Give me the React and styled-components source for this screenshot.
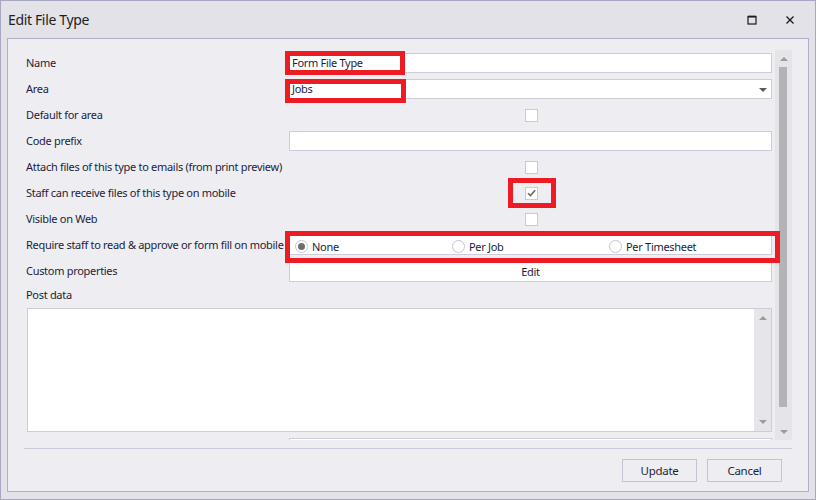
import React from "react";
import styled, { createGlobalStyle } from "styled-components";

const Global = createGlobalStyle`
  html, body { margin: 0; padding: 0; background: #e3e2e8; }
  * { box-sizing: border-box; }
  body { font-family: "Noto Sans", "Open Sans", sans-serif; font-size: 11px; letter-spacing: -0.3px; color: #1d1d38; }
`;

const Window = styled.div`
  position: relative;
  width: 816px;
  height: 500px;
  border: 1px solid #a7a6c3;
  background: #e3e2e8;
  display: flex;
  flex-direction: column;
`;

const TitleBar = styled.div`
  height: 37px;
  display: flex;
  align-items: center;
  padding: 0 6px 0 7px;
  font-size: 14px;
  letter-spacing: -0.35px;
  color: #1e1e1e;
`;

const Title = styled.div`
  flex: 1;
  padding-bottom: 1px;
`;

const WinButton = styled.div`
  width: 38px;
  height: 37px;
  display: flex;
  align-items: center;
  justify-content: center;
`;

const Panel = styled.div`
  flex: 1;
  margin: 0 6px 7px 6px;
  border: 1px solid #b1b0c9;
  background: #eeedf2;
  padding: 11px 16px 0 16px;
  display: flex;
  flex-direction: column;
`;

const Scroller = styled.div`
  height: 390px;
  display: flex;
  gap: 3px;
  overflow: hidden;
`;

const Form = styled.div`
  flex: 1;
  padding: 3px 0 0 2px;
  display: grid;
  grid-template-columns: 263px 1fr;
  grid-auto-rows: min-content;
  row-gap: 6px;
  align-content: start;
`;

const Label = styled.div`
  height: ${(p) => p.$h || 20}px;
  display: flex;
  align-items: center;
  white-space: nowrap;
  padding-bottom: 1px;
  grid-column: ${(p) => (p.$full ? "1 / -1" : "auto")};
`;

const Field = styled.div`
  height: 20px;
  background: #ffffff;
  border: 1px solid #cdccda;
  display: flex;
  align-items: center;
  padding-left: 2px;
  padding-bottom: 1px;
  position: relative;
  grid-column: ${(p) => (p.$col2 ? "2" : "auto")};
`;

const DropArrow = styled.div`
  position: absolute;
  right: 4px;
  top: 8px;
  width: 0;
  height: 0;
  border-left: 4px solid transparent;
  border-right: 4px solid transparent;
  border-top: 4px solid #5a5a5a;
`;

const CheckCell = styled.div`
  height: 20px;
  display: flex;
  align-items: center;
  justify-content: center;
`;

const CheckBox = styled.div`
  width: 13px;
  height: 13px;
  background: #ffffff;
  border: 1px solid #c9c8d6;
  display: flex;
  align-items: center;
  justify-content: center;
  margin-left: 1px;
`;

const RadioGroup = styled.div`
  height: 20px;
  background: #ffffff;
  border: 1px solid #cdccda;
  display: grid;
  grid-template-columns: repeat(3, 157px);
`;

const RadioItem = styled.div`
  display: flex;
  align-items: center;
  gap: 4px;
  padding: 2px 0 0 5px;
`;

const RadioCircle = styled.div`
  width: 13px;
  height: 13px;
  border-radius: 50%;
  border: 1px solid #c6c5d3;
  background: #ffffff;
  display: flex;
  align-items: center;
  justify-content: center;
  &::after {
    content: "";
    display: ${(p) => (p.$on ? "block" : "none")};
    width: 7px;
    height: 7px;
    border-radius: 50%;
    background: #6e6e6e;
  }
`;

const EditButton = styled.div`
  height: 20px;
  background: #ffffff;
  border: 1px solid #cdccda;
  display: flex;
  align-items: center;
  justify-content: center;
  padding-bottom: 1px;
  margin-top: 1px;
`;

const TextArea = styled.div`
  grid-column: 1 / -1;
  margin-left: 1px;
  height: 124px;
  background: #ffffff;
  border: 1px solid #cdccda;
  display: flex;
  justify-content: flex-end;
`;

const VBar = styled.div`
  width: 17px;
  flex: none;
  background: ${(p) => p.$bg || "#e4e4e9"};
  display: flex;
  flex-direction: column;
`;

const ArrowBox = styled.div`
  height: ${(p) => p.$h || 17}px;
  flex: none;
  display: flex;
  align-items: center;
  justify-content: center;
`;

const Tri = styled.div`
  width: 0;
  height: 0;
  border-left: 4px solid transparent;
  border-right: 4px solid transparent;
  ${(p) =>
    p.$up
      ? "border-bottom: 4px solid #9c9c9f;"
      : "border-top: 4px solid #9c9c9f;"}
`;

const Track = styled.div`
  flex: 1;
  display: flex;
  flex-direction: column;
  align-items: flex-start;
  padding-left: 4px;
`;

const Thumb = styled.div`
  width: 8px;
  height: ${(p) => p.$h}px;
  background: #b3b3b5;
`;

const Separator = styled.div`
  height: 1px;
  background: #cbcad8;
  margin-top: 8px;
`;

const Footer = styled.div`
  display: flex;
  justify-content: flex-end;
  gap: 10px;
  padding: 10px 10px 0 0;
`;

const Button = styled.div`
  width: 75px;
  height: 23px;
  border: 1px solid #c4c3d2;
  background: #eeedf2;
  display: flex;
  align-items: center;
  justify-content: center;
  font-size: 11.5px;
  padding-bottom: 1px;
`;

const Highlight = styled.div`
  position: absolute;
  left: ${(p) => p.$x}px;
  top: ${(p) => p.$y}px;
  width: ${(p) => p.$w}px;
  height: ${(p) => p.$h}px;
  border: 5px solid #ed1c24;
  pointer-events: none;
`;

const Check = () => (
  <svg width="9" height="8" viewBox="0 0 9 8">
    <path d="M1 4.2 L3.4 6.6 L8.2 1.2" fill="none" stroke="#6a6a6a" strokeWidth="1.6" />
  </svg>
);

const Row = ({ label, children }) => (
  <>
    <Label>{label}</Label>
    {children}
  </>
);

export default function App() {
  return (
    <>
      <Global />
      <Window>
        <TitleBar>
          <Title>Edit File Type</Title>
          <WinButton>
            <svg width="10" height="10" viewBox="0 0 10 10">
              <rect x="1" y="1.5" width="8" height="7.5" fill="none" stroke="#1a1a1a" strokeWidth="1.2" />
              <line x1="1" y1="1.6" x2="9" y2="1.6" stroke="#1a1a1a" strokeWidth="1.8" />
            </svg>
          </WinButton>
          <WinButton>
            <svg width="10" height="10" viewBox="0 0 10 10">
              <path d="M1.5 1.5 L8.5 8.5 M8.5 1.5 L1.5 8.5" stroke="#1a1a1a" strokeWidth="1.3" />
            </svg>
          </WinButton>
        </TitleBar>
        <Panel>
          <Scroller>
            <Form>
              <Row label="Name">
                <Field>Form File Type</Field>
              </Row>
              <Row label="Area">
                <Field>
                  Jobs
                  <DropArrow />
                </Field>
              </Row>
              <Row label="Default for area">
                <CheckCell>
                  <CheckBox />
                </CheckCell>
              </Row>
              <Row label="Code prefix">
                <Field />
              </Row>
              <Row label="Attach files of this type to emails (from print preview)">
                <CheckCell>
                  <CheckBox />
                </CheckCell>
              </Row>
              <Row label="Staff can receive files of this type on mobile">
                <CheckCell>
                  <CheckBox>
                    <Check />
                  </CheckBox>
                </CheckCell>
              </Row>
              <Row label="Visible on Web">
                <CheckCell>
                  <CheckBox />
                </CheckCell>
              </Row>
              <Row label="Require staff to read & approve or form fill on mobile">
                <RadioGroup>
                  <RadioItem>
                    <RadioCircle $on />
                    None
                  </RadioItem>
                  <RadioItem>
                    <RadioCircle />
                    Per Job
                  </RadioItem>
                  <RadioItem>
                    <RadioCircle />
                    Per Timesheet
                  </RadioItem>
                </RadioGroup>
              </Row>
              <Row label="Custom properties">
                <EditButton>Edit</EditButton>
              </Row>
              <Label $full $h={14}>
                Post data
              </Label>
              <TextArea>
                <VBar $bg="#e6e6ea">
                  <ArrowBox $h={18}>
                    <Tri $up />
                  </ArrowBox>
                  <Track />
                  <ArrowBox $h={18}>
                    <Tri />
                  </ArrowBox>
                </VBar>
              </TextArea>
              <Field $col2 />
            </Form>
            <VBar $bg="#e4e4e9">
              <ArrowBox>
                <Tri $up />
              </ArrowBox>
              <Track>
                <Thumb $h={340} />
              </Track>
              <ArrowBox>
                <Tri />
              </ArrowBox>
            </VBar>
          </Scroller>
          <Separator />
          <Footer>
            <Button>Update</Button>
            <Button>Cancel</Button>
          </Footer>
        </Panel>
        <Highlight $x={284} $y={50} $w={120} $h={24} />
        <Highlight $x={284} $y={78} $w={121} $h={24} />
        <Highlight $x={507} $y={177} $w={48} $h={30} />
        <Highlight $x={284} $y={230} $w={495} $h={32} />
      </Window>
    </>
  );
}
